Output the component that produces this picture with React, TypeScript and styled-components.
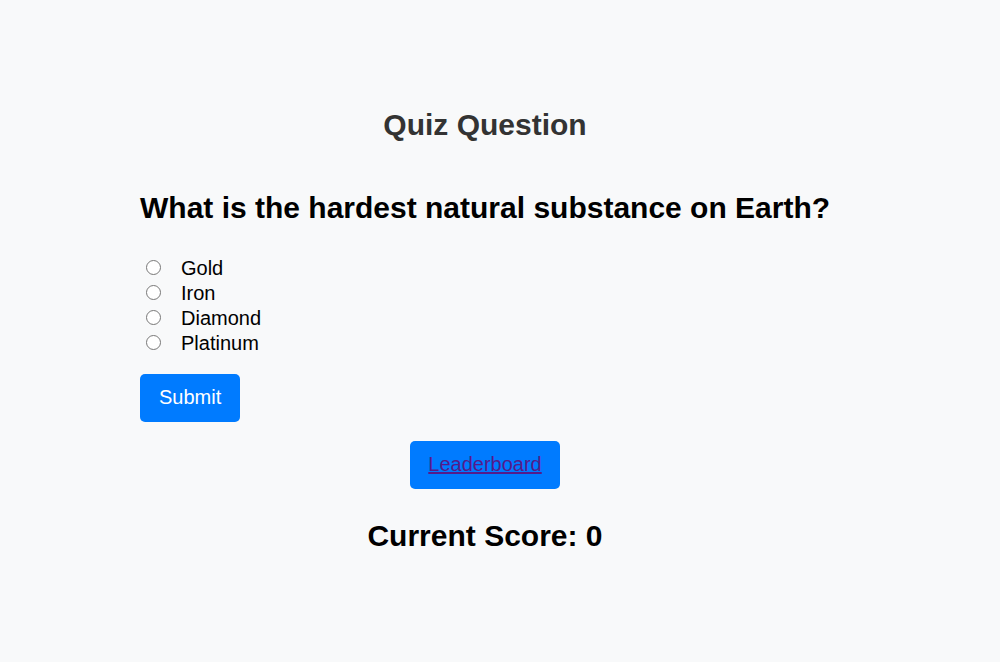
import { createGlobalStyle } from 'styled-components';
import styled from 'styled-components';

const GlobalStyle = createGlobalStyle`
  body {
    margin: 0;
    background-color: #f8f9fa;
    font-family: "Liberation Sans", Arial, sans-serif;
  }
`;

const options = ['Gold', 'Iron', 'Diamond', 'Platinum'];

export default function App() {
  return (
    <>
      <GlobalStyle />
      <Page>
        <Title>Quiz Question</Title>
        <Question>What is the hardest natural substance on Earth?</Question>
        <Options>
          {options.map((o) => (
            <Option key={o}>
              <input type="radio" name="answer" value={o} />
              <span>{o}</span>
            </Option>
          ))}
        </Options>
        <SubmitButton>Submit</SubmitButton>
        <LinkButton>
          <a href="#leaderboard">Leaderboard</a>
        </LinkButton>
        <Score>Current Score: 0</Score>
      </Page>
    </>
  );
}

const Page = styled.div`
  width: 690px;
  margin-left: 140px;
  padding-top: 108px;
  display: flex;
  flex-direction: column;
`;

const Title = styled.h1`
  margin: 0;
  text-align: center;
  font-size: 30px;
  color: #333;
`;

const Question = styled.h2`
  margin: 49px 0 0;
  font-size: 30px;
  color: #000;
  white-space: nowrap;
`;

const Options = styled.div`
  margin-top: 31px;
  display: flex;
  flex-direction: column;
`;

const Option = styled.label`
  display: flex;
  align-items: center;
  height: 25px;
  font-size: 20px;
  color: #000;
  input {
    margin: 0 3px 3px 6px;
    width: 15px;
    height: 15px;
  }
  span {
    margin-left: 17px;
  }
`;

const SubmitButton = styled.button`
  align-self: flex-start;
  margin-top: 18px;
  height: 48px;
  padding: 0 19px 2px;
  border: none;
  border-radius: 5px;
  background-color: #007bff;
  color: #fff;
  font-family: inherit;
  font-size: 20px;
  cursor: pointer;
`;

const LinkButton = styled.button`
  align-self: center;
  margin-top: 19px;
  height: 48px;
  width: 150px;
  padding: 0 0 2px;
  border: none;
  border-radius: 5px;
  background-color: #007bff;
  font-family: inherit;
  font-size: 20px;
  cursor: pointer;
  a {
    color: #551a8b;
  }
`;

const Score = styled.h2`
  margin: 30px 0 0;
  text-align: center;
  font-size: 30px;
  color: #000;
`;
